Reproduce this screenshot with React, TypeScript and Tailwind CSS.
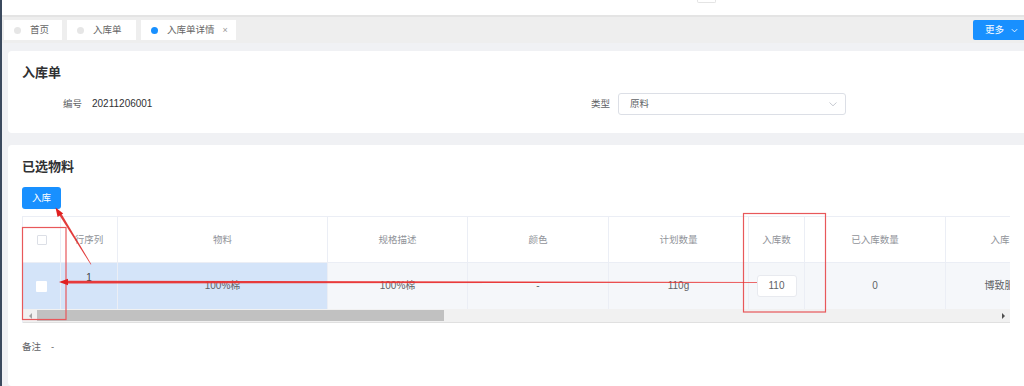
import React from 'react';

const font = "font-['Liberation_Sans','Noto_Sans_CJK_SC',sans-serif]";

const columns = [
  { key: 'check', label: '', width: 'w-[38px]', fixed: true },
  { key: 'index', label: '行序列', width: 'w-[57px]', fixed: true },
  { key: 'material', label: '物料', width: 'w-[210px]', fixed: true },
  { key: 'spec', label: '规格描述', width: 'w-[140px]' },
  { key: 'color', label: '颜色', width: 'w-[141px]' },
  { key: 'plan', label: '计划数量', width: 'w-[140px]' },
  { key: 'qty', label: '入库数', width: 'w-[56px]' },
  { key: 'done', label: '已入库数量', width: 'w-[141px]' },
  { key: 'house', label: '入库仓库', width: 'w-[128px]' },
];

const row: Record<string, string> = {
  index: '1',
  material: '100%棉',
  spec: '100%棉',
  color: '-',
  plan: '110g',
  done: '0',
  house: '博致服装厂',
};

const Tab: React.FC<{ label: string; width: string; active?: boolean }> = ({ label, width, active }) => (
  <div className={`flex items-center h-[20px] bg-white pl-[10px] ${width}`}>
    <span className={`w-[7px] h-[7px] rounded-full ${active ? 'bg-[#1890ff]' : 'bg-[#e6e6e6]'}`} />
    <span className="ml-[9px] text-[9.5px] leading-[12px] text-[#666]">{label}</span>
    {active && <span className="ml-[8px] text-[9px] leading-[12px] text-[#999]">×</span>}
  </div>
);

const Annotations: React.FC = () => (
  <svg className="absolute left-0 top-0 pointer-events-none" width="1024" height="386">
    <rect x="22.5" y="227.5" width="43.5" height="92" fill="none" stroke="#e8585a" strokeWidth="1.2" />
    <rect x="743.5" y="213.5" width="82" height="98.5" fill="none" stroke="#e8585a" strokeWidth="1.2" />
    {/* long horizontal arrow, thick at head, thin at tail */}
    <polygon points="66,280.7 757,281.9 757,282.7 66,283.5" fill="#e83030" opacity="0.95" />
    <polygon points="59,282 68,278.8 68,285.2" fill="#e02020" />
    {/* diagonal arrow to button */}
    <polygon points="61.6,213.9 91.3,264.2 90.7,264.5 59.4,215.3" fill="#e03030" opacity="0.95" />
    <polygon points="55.5,207.5 63.2,213.4 57.6,216.9" fill="#e02020" />
  </svg>
);

const App: React.FC = () => {
  return (
    <div className={`relative w-[1024px] h-[386px] overflow-hidden flex bg-[#f0f1f4] ${font}`}>
      <div className="w-[2px] h-full bg-[#3b4a5e]" />
      <div className="flex-1 flex flex-col min-w-0">
        {/* top header */}
        <div className="h-[15px] bg-white flex shrink-0">
          <div className="ml-[695px] w-[19px] h-[3px] border-x border-b border-[#e4e4e4] rounded-b-[2px]" />
        </div>
        <div className="h-[2px] bg-[#e4e4e4] shrink-0" />

        {/* tabs */}
        <div className="h-[26px] bg-[#eeeeee] flex items-center pl-[2px] gap-[5px] shrink-0">
          <Tab label="首页" width="w-[58px]" />
          <Tab label="入库单" width="w-[69px]" />
          <Tab label="入库单详情" width="w-[95px]" active />
          <div className="ml-auto h-[20px] w-[51px] bg-[#1890ff] rounded-l-[2px] flex items-center pl-[12px] text-white">
            <span className="text-[9.5px] leading-[12px]">更多</span>
            <svg className="ml-[6px]" width="9" height="9" viewBox="0 0 10 10">
              <path d="M2 3.5 L5 6.5 L8 3.5" fill="none" stroke="#fff" strokeWidth="1" />
            </svg>
          </div>
        </div>

        {/* content */}
        <div className="flex-1 pl-[6px] pt-[8px] flex flex-col">
          <div className="bg-white rounded-l-[4px] pl-[14px] pt-[14px] pb-[18px]">
            <div className="text-[13px] leading-[16px] font-bold text-[#303133]">入库单</div>
            <div className="mt-[12px] flex items-center h-[22px] text-[9.5px] leading-[12px]">
              <div className="w-[494px] flex items-center">
                <span className="w-[60px] text-right text-[#606266]">编号</span>
                <span className="ml-[10px] text-[10px] text-[#303133]">20211206001</span>
              </div>
              <span className="w-[94px] text-right text-[#606266]">类型</span>
              <div className="ml-[8px] w-[228px] h-[22px] border border-[#dcdfe6] rounded-[3px] flex items-center pl-[11px] pr-[7px]">
                <span className="text-[#606266] flex-1">原料</span>
                <svg width="10" height="10" viewBox="0 0 10 10">
                  <path d="M1.5 3.5 L5 6.8 L8.5 3.5" fill="none" stroke="#c0c4cc" strokeWidth="0.9" />
                </svg>
              </div>
            </div>
          </div>

          <div className="mt-[12px] flex-1 bg-white rounded-l-[4px] pl-[14px] pt-[14px]">
            <div className="text-[13px] leading-[16px] font-bold text-[#303133]">已选物料</div>
            <button className="mt-[12px] w-[39px] h-[22px] bg-[#1890ff] rounded-[3px] text-white text-[9.5px] leading-[12px]">
              入库
            </button>

            <div className="mt-[7px] w-[988px] overflow-hidden border-t border-l border-[#ebeef5]">
              <div className="flex h-[46px] bg-white">
                {columns.map((c) => (
                  <div
                    key={c.key}
                    className={`${c.width} shrink-0 border-r border-b border-[#ebeef5] flex items-center justify-center text-[9.5px] leading-[12px] text-[#909399] whitespace-nowrap`}
                  >
                    {c.key === 'check' ? (
                      <span className="w-[10px] h-[10px] border border-[#dcdfe6] bg-white rounded-[1px]" />
                    ) : (
                      c.label
                    )}
                  </div>
                ))}
              </div>
              <div className="flex h-[46px] bg-[#f5f7fa]">
                {columns.map((c) => (
                  <div
                    key={c.key}
                    className={`${c.width} shrink-0 border-r border-[#ebeef5] flex items-center justify-center text-[10px] leading-[12px] text-[#606266] whitespace-nowrap ${
                      c.fixed ? 'bg-[#d4e4f9]' : ''
                    }`}
                  >
                    {c.key === 'check' && <span className="w-[11px] h-[11px] bg-white rounded-[1px]" />}
                    {c.key === 'index' && <span className="mb-[16px] text-[#404246]">1</span>}
                    {c.key === 'qty' && (
                      <span className="w-[40px] h-[22px] bg-white border border-[#e8eaef] rounded-[3px] flex items-center justify-center text-[#606266]">
                        110
                      </span>
                    )}
                    {c.key !== 'check' && c.key !== 'index' && c.key !== 'qty' && row[c.key]}
                  </div>
                ))}
              </div>
              <div className="flex h-[14px] bg-[#f1f1f1] border-b border-[#e0e0e0]">
                <div className="w-[14px] flex items-center justify-center">
                  <span className="w-0 h-0 border-y-[3px] border-y-transparent border-r-[3px] border-r-[#a3a3a3]" />
                </div>
                <div className="w-[407px] my-[1px] bg-[#c1c1c1]" />
                <div className="flex-1" />
                <div className="w-[14px] flex items-center justify-center">
                  <span className="w-0 h-0 border-y-[3px] border-y-transparent border-l-[3px] border-l-[#505050]" />
                </div>
              </div>
            </div>

            <div className="mt-[18px] flex text-[9.5px] leading-[12px] text-[#606266]">
              <span>备注</span>
              <span className="ml-[10px]">-</span>
            </div>
          </div>
        </div>
      </div>
      <Annotations />
    </div>
  );
};

export default App;
